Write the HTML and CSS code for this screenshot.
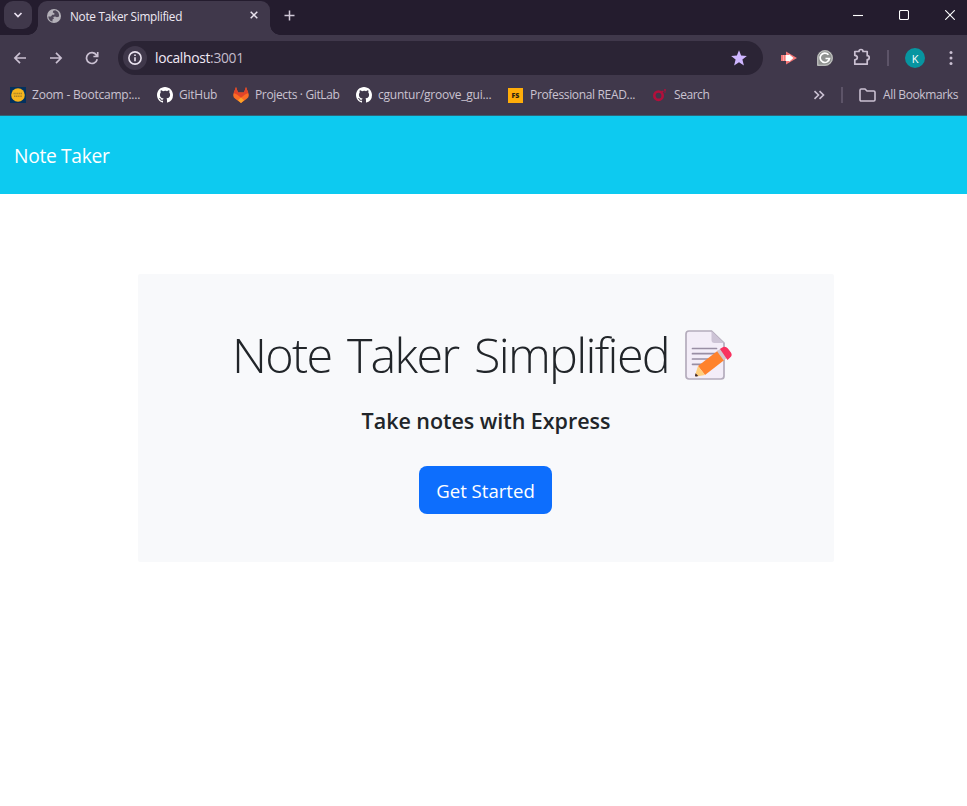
FILE: index.html
```
<!DOCTYPE html>
<html lang="en">
<head>
<meta charset="utf-8">
<title>Note Taker Simplified</title>
<link rel="stylesheet" href="styles.css">
</head>
<body>
<svg class="defs" aria-hidden="true">
  <symbol id="github" viewBox="0 0 16 16"><path fill="#fff" d="M8 0C3.58 0 0 3.58 0 8c0 3.54 2.29 6.53 5.47 7.59.4.07.55-.17.55-.38v-1.49c-2.01.37-2.53-.49-2.69-.94-.09-.23-.48-.94-.82-1.13-.28-.15-.68-.52-.01-.53.63-.01 1.08.58 1.23.82.72 1.21 1.87.87 2.33.66.07-.52.28-.87.51-1.07-1.78-.2-3.64-.89-3.64-3.95 0-.87.31-1.59.82-2.15-.08-.2-.36-1.02.08-2.12 0 0 .67-.21 2.2.82A7.7 7.7 0 0 1 8 3.87c.68 0 1.36.09 2 .26 1.53-1.04 2.2-.82 2.2-.82.44 1.1.16 1.92.08 2.12.51.56.82 1.27.82 2.15 0 3.07-1.87 3.75-3.65 3.95.29.25.54.73.54 1.48v2.2c0 .21.15.46.55.38A8 8 0 0 0 16 8c0-4.42-3.58-8-8-8z"/></symbol>
</svg>
<header class="browser">
  <div class="tabstrip">
    <button class="tab-search" aria-label="Search tabs"><svg width="10" height="8" viewBox="0 0 10 8"><path d="M1.5 2 5 5.5 8.5 2"/></svg></button>
    <div class="tab">
      <svg class="globe" width="14" height="14" viewBox="0 0 14 14"><circle cx="7" cy="7" r="7" fill="#b4b1b9"/><path d="M8.2 1.2 6.2 1.8 5.8 3.6 7.4 4.2 7.3 5.8H5.2L4 7.4H1.3C1.3 9.8 3 12 5.5 12.6V10.5L7 9.6 6.2 8 8 7.4 10 8.3 12 7.6C12.6 4.6 10.8 2 8.2 1.2z" fill="#514a5b"/></svg>
      <span class="tab-title">Note Taker Simplified</span>
      <svg class="tab-close" width="8" height="8" viewBox="0 0 8 8"><path d="m.7.7 6.6 6.6m0-6.6L.7 7.3"/></svg>
    </div>
    <svg class="new-tab" width="11" height="11" viewBox="0 0 11 11"><path d="M5.5.5v10M.5 5.5h10"/></svg>
    <div class="window-controls">
      <svg width="10" height="10" viewBox="0 0 10 10"><path d="M0 5.5h10"/></svg>
      <svg width="10" height="10" viewBox="0 0 10 10"><rect x=".5" y=".5" width="9" height="9" rx="1.3"/></svg>
      <svg width="10" height="10" viewBox="0 0 10 10"><path d="m.2.2 9.6 9.6m0-9.6L.2 9.8"/></svg>
    </div>
  </div>
  <div class="toolbar">
    <svg class="nav-icon" width="14" height="14" viewBox="0 0 14 14"><path d="M13 7H2M7 1.900 1.900 7 7 12.100"/></svg>
    <svg class="nav-icon" width="14" height="14" viewBox="0 0 14 14"><path d="M1 7h11M7 1.900 12.100 7 7 12.100"/></svg>
    <svg class="nav-icon" width="14" height="14" viewBox="0 0 14 14"><path d="M12.2 8.2A5.4 5.4 0 1 1 11.5 4.2L12.5 5.4M12.7 1v4.5H8.4"/></svg>
    <div class="omnibox">
      <span class="site-info"><svg width="14" height="14" viewBox="0 0 14 14"><circle cx="7" cy="7" r="6.1"/><path d="M7 6.2v4M7 3.6v1.5"/></svg></span>
      <span class="url">localhost<span class="port">:3001</span></span>
      <svg class="star" width="16" height="16" viewBox="0 0 16 16"><path d="m8 .2 2.1 5.3 5.8.4-4.5 3.7 1.5 5.8L8 12.2l-4.9 3.2 1.5-5.8L.1 5.9l5.8-.4z"/></svg>
    </div>
    <div class="extensions">
      <svg width="16" height="14" viewBox="0 0 16 14"><path d="M0 4h5V.5L16 7 5 13.500V10H0z" fill="#f47778"/><path d="M5 4h3v-.8L12.500 7 8 10.800V10H5z" fill="#fff"/><path d="M2.500 4v6M4.500 4v6" stroke="#fba7a5" fill="none"/></svg>
      <svg class="grammarly" width="16" height="16" viewBox="0 0 16 16"><path d="M0 16V8a8 8 0 1 1 8 8z" fill="#8f9290"/><path d="M.8 15.200V8A7.200 7.200 0 1 1 8 15.200z" fill="none" stroke="#c8c8c8"/><path d="M11.500 4.800A4.700 4.700 0 1 0 12.500 8.500H8.500" fill="none" stroke="#fff" stroke-width="1.700"/></svg>
      <svg class="puzzle" width="18" height="18" viewBox="0 0 18 18"><path d="M1.800 3.500H6Q6 1.500 8 1.500T10 3.500h4.200v4.200q2 0 2 2t-2 2v4.500H1.800v-4.400q2.500-.2 2.500-2.200T1.800 7.400z" fill="none" stroke="#cac0d2" stroke-width="1.700" stroke-linejoin="round"/></svg>
    </div>
    <span class="divider"></span>
    <span class="avatar">K</span>
    <svg class="menu" width="4" height="16" viewBox="0 0 4 16"><circle cx="2" cy="2.500" r="1.500"/><circle cx="2" cy="8" r="1.500"/><circle cx="2" cy="13.500" r="1.500"/></svg>
  </div>
  <nav class="bookmarks">
    <a class="bookmark bm-zoom"><svg width="16" height="16" viewBox="0 0 16 16"><path fill="#03315e" d="M0 0h16v16H0z"/><circle cx="8" cy="8" r="6.800" fill="#f5b51d"/><path d="M3.500 6.500h9M4 9.200h8" stroke="#a98428" stroke-width="1.500" stroke-dasharray="1.300 .5"/></svg><span>Zoom - Bootcamp:...</span></a>
    <a class="bookmark bm-github"><svg width="16" height="16"><use href="#github"/></svg><span>GitHub</span></a>
    <a class="bookmark bm-gitlab"><svg width="16" height="16" viewBox="0 0 16 16"><path fill="#fc6d26" d="M3 0 5 5.400h6L13 0l2.300 6q1.500 3.500-1.500 5.800L8 16l-5.800-4.200Q-.800 9.500.7 6z"/><path fill="#e24329" d="M3 0 5 5.400h6L13 0l2.300 6-3.300 1.500L8 10.800 4 7.500.7 6z"/><path fill="#fca326" d="m8 10.500 3 2.800L8 16l-3-2.700z"/></svg><span>Projects · GitLab</span></a>
    <a class="bookmark bm-groove"><svg width="16" height="16"><use href="#github"/></svg><span>cguntur/groove_gui...</span></a>
    <a class="bookmark bm-readme"><span class="fs-icon">FS</span><span>Professional READ...</span></a>
    <a class="bookmark bm-search"><svg width="16" height="16" viewBox="0 0 16 16"><circle cx="6.500" cy="8.700" r="4.200" fill="none" stroke="#b20f3b" stroke-width="2.600"/><path d="M9.500 4.500h2M12 3h2M12.500 5h1" stroke="#b20f3b" stroke-width="1.700"/></svg><span>Search</span></a>
    <div class="bookmarks-end">
      <svg class="overflow" width="12" height="10" viewBox="0 0 12 10"><path d="m1.500 1.200 4 3.800-4 3.800m5-7.600 4 3.800-4 3.800"/></svg>
      <span class="divider"></span>
      <svg class="folder" width="17" height="14" viewBox="0 0 17 14"><path d="M1 2.200Q1 1 2.200 1H6l2 2h6.800Q16 3 16 4.200v7.600q0 1.200-1.200 1.200H2.200Q1 13 1 11.800z"/></svg>
      <span class="all-label">All Bookmarks</span>
    </div>
  </nav>
</header>
<nav class="navbar"><a class="brand">Note Taker</a></nav>
<main class="hero">
  <h1><span>Note Taker Simplified</span>
    <svg class="memo" width="50" height="52" viewBox="0 0 50 52"><path d="M5 2h22.500L40 14v33q0 3-3 3H5q-3 0-3-3V5q0-3 3-3z" fill="#f3edf8" stroke="#b4acbc" stroke-width="1.700"/><path d="M27.500 2v9q0 3 3 3H40z" fill="#cdc4d6"/><path d="M8.500 19.500h24M8.500 24.700h23M8.500 30h17M8.500 35.300h10" stroke="#998ea4" stroke-width="1.700" stroke-linecap="round"/><path d="m14 37 20-15.500 7 9L21 46z" fill="#ff822d"/><path d="m14 37-3 9.500q0 1.300 1.300 1L21 46z" fill="#ffce7c"/><path d="m11.600 44.200-.6 2.300q0 1.300 1.300 1l2-.4z" fill="#402a32"/><path d="m33 22.300 4-3 6.800 9-4 3.200z" fill="#d3c5cf"/><path d="m36 20 2.200-1.500q3.200-2 5.700 1l3 4q2 3-1 5.200L43.500 31z" fill="#f8315f"/></svg>
  </h1>
  <h2>Take notes with Express</h2>
  <a class="start">Get Started</a>
</main>
</body>
</html>
```
FILE: styles.css
```
* { box-sizing: border-box; }
body {
  margin: 0;
  background: #fff;
  color: #212529;
  font-family: "Open Sans", "Noto Sans", sans-serif;
}
svg { display: block; flex: none; }
.defs { display: none; }
.browser { background: #40384b; height: 116px; border-bottom: 1px solid #316477; color: #cac3d1; }
.tabstrip { height: 35px; background: #241c2e; display: flex; align-items: flex-start; }
.tab-search {
  width: 28px; height: 28px; margin: 1px 6px 0 4px; padding: 0;
  border: 0; border-radius: 9px; background: #40384b;
  display: grid; place-items: center;
}
.tab-search svg { fill: none; stroke: #e9e0f0; stroke-width: 1.7; }
.tab {
  position: relative;
  width: 232px; height: 34px; margin-top: 1px; padding: 0 12px 4px 9px;
  display: flex; align-items: center;
  border-radius: 9px 9px 0 0; background: #40384b;
}
.tab::before, .tab::after { content: ""; position: absolute; bottom: 0; width: 10px; height: 10px; }
.tab::before { left: -10px; background: radial-gradient(circle at 0 0, transparent 9.5px, #40384b 10px); }
.tab::after { right: -10px; background: radial-gradient(circle at 100% 0, transparent 9.5px, #40384b 10px); }
.tab-title { margin: 0 0 0 9px; font-size: 11.8px; letter-spacing: -.28px; color: #eee8f3; white-space: nowrap; }
.tab-close { margin: -2px 0 0 auto; fill: none; stroke: #e9e3ee; stroke-width: 1.5; }
.new-tab { margin: 10px 0 0 14px; fill: none; stroke: #d0c8d7; stroke-width: 1.5; }
.window-controls { margin: 10px 12px 0 auto; display: flex; gap: 36px; }
.window-controls svg { fill: none; stroke: #fff; stroke-width: 1.1; }
.toolbar { height: 46px; display: flex; align-items: center; padding: 0 14px 0 13px; }
.nav-icon { margin-right: 22px; fill: none; stroke: #cac0d2; stroke-width: 1.7; }
.omnibox {
  width: 645px; height: 34px; margin-left: -3px; padding: 0 16px 0 5px;
  display: flex; align-items: center; border-radius: 17px; background: #2b2435;
}
.site-info { width: 24px; height: 24px; border-radius: 50%; background: #40384b; display: grid; place-items: center; }
.site-info svg { fill: none; stroke: #e9e2ef; stroke-width: 1.6; }
.url { margin: -1px 0 0 8px; font-size: 13.8px; letter-spacing: -.3px; color: #f1eaf6; }
.port { color: #c4bccc; }
.star { margin-left: auto; fill: #cfb6ff; }
.extensions { display: flex; align-items: center; gap: 20px; margin-left: 18px; }
.puzzle { margin-top: -2px; }
.divider { flex: none; width: 2px; height: 16px; background: #5d5468; }
.toolbar .divider { margin: 0 16px 0 16px; }
.avatar {
  flex: none; width: 20px; height: 20px; border-radius: 50%;
  background: #0795a0; color: #fff; font-size: 11px;
  display: grid; place-items: center;
}
.menu { margin-left: auto; fill: #cac0d2; }
.bookmarks { display: flex; align-items: center; height: 28px; padding-left: 10px; font-size: 12px; letter-spacing: -.23px; white-space: nowrap; }
.bookmark { flex: none; display: flex; align-items: center; gap: 6px; }
.bookmark > span:last-child, .all-label { margin-top: -1px; }
.bm-zoom { width: 147px; }
.bm-github { width: 76px; }
.bm-gitlab { width: 123px; letter-spacing: -.35px; }
.bm-groove { width: 152px; }
.bm-readme { width: 144px; letter-spacing: -.34px; }
.bm-search { letter-spacing: -.45px; }
.fs-icon { width: 15px; height: 15px; margin-right: 1px; background: #ffad09; color: #2d2211; font-size: 7px; font-weight: 800; letter-spacing: 0; display: grid; place-items: center; }
.bookmarks-end { margin-left: auto; margin-right: 8px; display: flex; align-items: center; }
.overflow { fill: none; stroke: #cac0d2; stroke-width: 1.6; }
.bookmarks-end .divider { margin: 0 16px; }
.folder { fill: none; stroke: #cac0d2; stroke-width: 1.6; }
.all-label { width: 76px; margin-left: 7px; letter-spacing: -.37px; }
.navbar { height: 78px; background: #0dcaf0; display: flex; align-items: center; padding: 1px 14px 0; }
.brand { color: #fff; font-size: 19.2px; letter-spacing: -.3px; }
.hero {
  width: 696px; height: 288px; margin: 80px 0 0 138px; padding-top: 50px;
  background: #f8f9fb; border-radius: 2px;
  display: flex; flex-direction: column; align-items: center;
}
h1 {
  margin: 0; height: 60px; width: 504px;
  display: flex; align-items: center; justify-content: space-between;
  font-size: 48.5px; font-weight: 300; line-height: 60px; letter-spacing: -1.7px; word-spacing: 4.5px; white-space: nowrap;
}
h1 span { margin-left: -2px; }
.memo { margin: 1px 4px 0 0; }
h2 { margin: 23px 0 0; font-size: 21.5px; font-weight: 600; line-height: 28px; letter-spacing: -.04px; }
.start {
  width: 133px; height: 48px; margin: 31px 1px 0 0;
  display: grid; place-items: center; border-radius: 8px;
  background: #0d6efd; color: #fff; font-size: 18.6px;
}
```
